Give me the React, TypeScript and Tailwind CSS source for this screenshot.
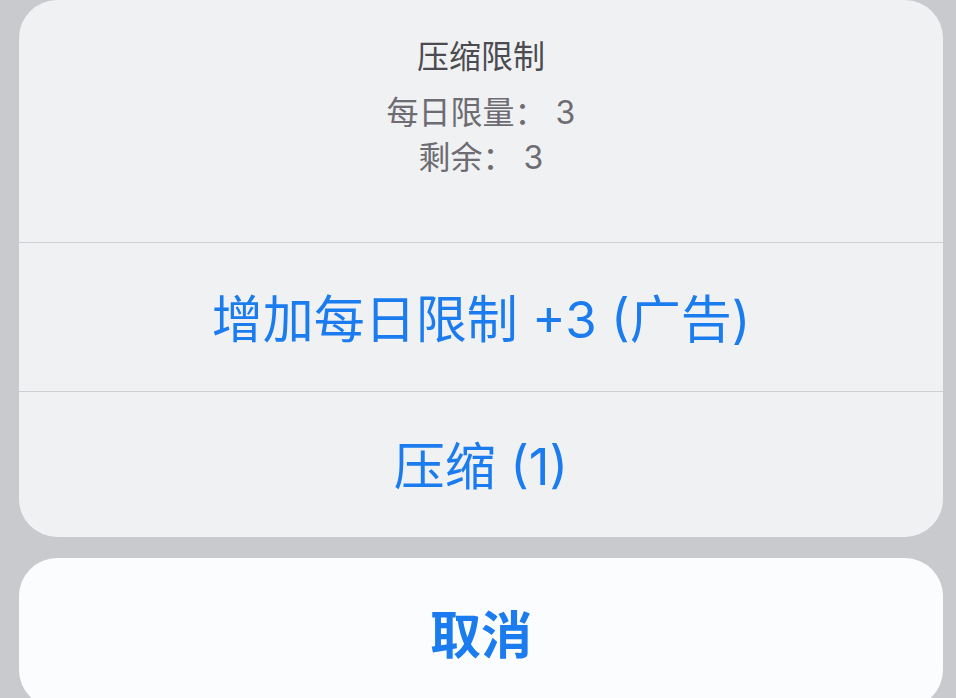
import React from "react";

const font = {
  fontFamily: '"Inter", "Noto Sans CJK SC", sans-serif',
};

function SheetButton({
  children,
  bold = false,
  height,
}: {
  children: React.ReactNode;
  bold?: boolean;
  height: string;
}) {
  return (
    <button
      type="button"
      className={`flex w-full shrink-0 items-center justify-center pt-[4px] text-[51px] leading-none text-[#1b7cf0] ${height} ${
        bold ? "font-bold" : "font-normal"
      }`}
    >
      {children}
    </button>
  );
}

export default function App() {
  return (
    <div
      className="flex h-[698px] w-[956px] flex-col gap-[21px] overflow-hidden bg-[#c9cacd] pl-[19px] pr-[13px]"
      style={font}
    >
      <div className="flex shrink-0 flex-col overflow-hidden rounded-[38px] bg-[#f0f1f3]">
        <div className="flex h-[242px] shrink-0 flex-col items-center pt-[37px] text-center">
          <p className="text-[32px] font-normal leading-[40px] text-[#4c4b51]">压缩限制</p>
          <p className="mt-[13px] text-[32px] leading-[45px] text-[#6d6c72]">每日限量： 3</p>
          <p className="text-[32px] leading-[45px] text-[#6d6c72]">剩余： 3</p>
        </div>
        <div className="h-px shrink-0 bg-[#cfd0d3]" />
        <SheetButton height="h-[148px]">增加每日限制 +3 (广告)</SheetButton>
        <div className="h-px shrink-0 bg-[#cfd0d3]" />
        <SheetButton height="h-[145px]">压缩 (1)</SheetButton>
      </div>
      <div className="shrink-0 rounded-[38px] bg-[#fbfcfe]">
        <SheetButton bold height="h-[150px]">
          取消
        </SheetButton>
      </div>
    </div>
  );
}
